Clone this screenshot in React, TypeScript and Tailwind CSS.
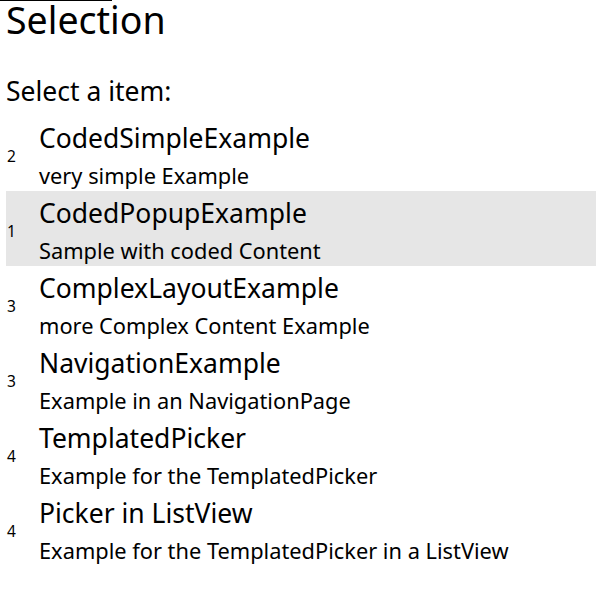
const items = [
  { count: 2, title: "CodedSimpleExample", detail: "very simple Example" },
  { count: 1, title: "CodedPopupExample", detail: "Sample with coded Content", selected: true },
  { count: 3, title: "ComplexLayoutExample", detail: "more Complex Content Example" },
  { count: 3, title: "NavigationExample", detail: "Example in an NavigationPage" },
  { count: 4, title: "TemplatedPicker", detail: "Example for the TemplatedPicker" },
  { count: 4, title: "Picker in ListView", detail: "Example for the TemplatedPicker in a ListView" },
];

export default function App() {
  return (
    <div className="min-h-[596px] w-[596px] bg-white text-black font-['Segoe_UI','Noto_Sans',sans-serif]">
      <div className="h-px w-[112px] bg-black" />
      <div className="pl-[6px]">
        <h1 className="text-[37.5px] leading-[37px]">Selection</h1>
        <p className="mt-[37px] text-[26.5px] leading-[32px]">Select a item:</p>
        <ul className="mt-[9px]">
          {items.map((item) => (
            <li
              key={item.title}
              className={"flex h-[75px] " + (item.selected ? "bg-[#e6e6e6]" : "")}
            >
              <span className="w-[33px] self-center pl-px pt-[4px] text-[15.5px] leading-[20px]">
                {item.count}
              </span>
              <div className="flex flex-col pt-[6px]">
                <span className="text-[26.5px] leading-[32px]">{item.title}</span>
                <span className="mt-[7px] text-[21.8px] leading-[30px]">{item.detail}</span>
              </div>
            </li>
          ))}
        </ul>
      </div>
    </div>
  );
}
